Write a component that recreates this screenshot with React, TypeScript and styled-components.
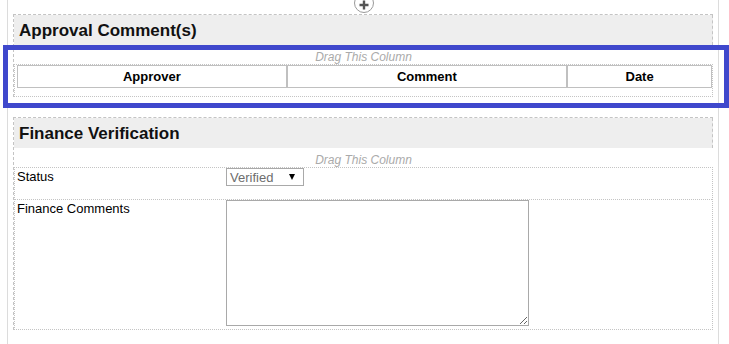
import React from 'react'
import styled, { createGlobalStyle } from 'styled-components'

const GlobalStyle = createGlobalStyle`
  html, body {
    margin: 0;
    padding: 0;
    background: #fff;
    font-family: "Liberation Sans", Arial, sans-serif;
  }
  * { box-sizing: border-box; }
`

const Page = styled.div`
  position: relative;
  width: 729px;
  height: 344px;
  overflow: hidden;
`

const Canvas = styled.div`
  margin-left: 7px;
  width: 712px;
  height: 344px;
  border-left: 1px solid #dcdcdc;
  border-right: 1px solid #dcdcdc;
  padding: 14px 5px 0 5px;
  display: flex;
  flex-direction: column;
  gap: 20px;
`

const AddButton = styled.div`
  position: absolute;
  left: 354px;
  top: -7px;
  width: 20px;
  height: 20px;
  border-radius: 50%;
  border: 1px solid #9a9a9a;
  background: #fff;
  display: flex;
  align-items: center;
  justify-content: center;
  padding-top: 4px;
`

const Section = styled.div`
  width: 700px;
  border-left: 1px dashed #c4c4c4;
  border-top: 1px dashed #c4c4c4;
  display: flex;
  flex-direction: column;
`

const SectionHeader = styled.div`
  height: 30px;
  background: #eeeeee;
  border-right: 1px dashed #c4c4c4;
  padding-left: 5px;
  font-size: 17px;
  font-weight: bold;
  line-height: 31px;
  color: #111;
`

const DragLabel = styled.div`
  height: 19px;
  padding-top: 5px;
  line-height: 15px;
  text-align: center;
  font-size: 12px;
  font-style: italic;
  color: #aaaaaa;
  white-space: nowrap;
`

const DropZone = styled.div<{ $pad?: boolean }>`
  border: 1px dotted #c4c4c4;
  padding: ${p => (p.$pad ? '0 0 8px 2px' : '0')};
`

const HeaderRow = styled.div`
  display: flex;
  height: 23px;
`

const HeadCell = styled.div<{ $w: number }>`
  width: ${p => p.$w}px;
  border: 1px solid #c0c0c0;
  font-size: 13px;
  font-weight: bold;
  text-align: center;
  line-height: 21px;
  color: #000;
`

const FormRow = styled.div<{ $h: number; $last?: boolean }>`
  display: flex;
  height: ${p => p.$h}px;
  border-bottom: ${p => (p.$last ? 'none' : '1px dotted #c4c4c4')};
`

const Label = styled.div`
  width: 211px;
  padding: 1px 0 0 2px;
  font-size: 13px;
  line-height: 15px;
  color: #000;
`

const Value = styled.div`
  flex: 1;
`

const SelectBox = styled.div`
  width: 78px;
  height: 18px;
  border: 1px solid #a9a9a9;
  display: flex;
  align-items: center;
  justify-content: space-between;
  padding: 0 8px 0 3px;
  font-size: 13px;
  color: #6d6d6d;
`

const Caret = styled.span`
  width: 0;
  height: 0;
  border-left: 3.5px solid transparent;
  border-right: 3.5px solid transparent;
  border-top: 6px solid #000;
`

const TextArea = styled.textarea`
  display: block;
  width: 303px;
  height: 126px;
  border: 1px solid #a9a9a9;
  border-radius: 0;
  margin: 0;
  font-family: "Liberation Sans", Arial, sans-serif;
`

const Highlight = styled.div`
  position: absolute;
  left: 3px;
  top: 45px;
  width: 726px;
  height: 63px;
  border: 5px solid #3f48cc;
  pointer-events: none;
`

const columns = [
  { name: 'Approver', w: 270 },
  { name: 'Comment', w: 281 },
  { name: 'Date', w: 145 },
]

const App = () => {
  return (
    <Page>
      <GlobalStyle />
      <Canvas>
        <Section>
          <SectionHeader>Approval Comment(s)</SectionHeader>
          <DragLabel>Drag This Column</DragLabel>
          <DropZone $pad>
            <HeaderRow>
              {columns.map(c => (
                <HeadCell key={c.name} $w={c.w}>{c.name}</HeadCell>
              ))}
            </HeaderRow>
          </DropZone>
        </Section>

        <Section>
          <SectionHeader>Finance Verification</SectionHeader>
          <DragLabel>Drag This Column</DragLabel>
          <DropZone>
            <FormRow $h={32}>
              <Label>Status</Label>
              <Value>
                <SelectBox>
                  Verified
                  <Caret />
                </SelectBox>
              </Value>
            </FormRow>
            <FormRow $h={129} $last>
              <Label>Finance Comments</Label>
              <Value>
                <TextArea />
              </Value>
            </FormRow>
          </DropZone>
        </Section>
      </Canvas>

      <AddButton>
        <svg width="10" height="10" viewBox="0 0 10 10">
          <path d="M5 0.5v9M0.5 5h9" stroke="#555" strokeWidth="2.4" />
        </svg>
      </AddButton>
      <Highlight />
    </Page>
  )
}

export default App
